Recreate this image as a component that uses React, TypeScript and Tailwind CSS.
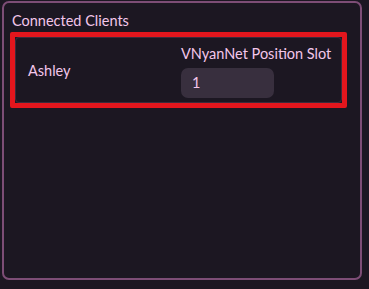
export default function App() {
    return (
        <div className="w-[369px] h-[289px] bg-[#1c1722] pt-px pl-[2px] font-['Lato','Liberation_Sans',sans-serif] text-[#f3c6ea]">
            <div className="w-[360px] h-[279px] border-2 border-[#7d4d76] rounded-[7px] px-[6px] pt-[8px]">
                <h2 className="text-[14.5px] leading-[20px] ml-[2px] mb-[1px]">Connected Clients</h2>
                <div className="w-[337px] border-[5px] border-[#e3161d] rounded-[2px]">
                    <div className="h-[66px] border border-[#3a2c3c] rounded-[4px] flex items-center pl-[12px]">
                        <span className="w-[153px] text-[14.5px] mt-[2px]">Ashley</span>
                        <div className="flex flex-col pt-[2px]">
                            <span className="text-[14.5px] leading-[18px]">VNyanNet Position Slot</span>
                            <div className="mt-[5px] w-[93px] h-[30px] rounded-[7px] bg-[#382f3e] flex items-center pl-[11px] text-[14.5px]">1</div>
                        </div>
                    </div>
                </div>
            </div>
        </div>
    );
}
